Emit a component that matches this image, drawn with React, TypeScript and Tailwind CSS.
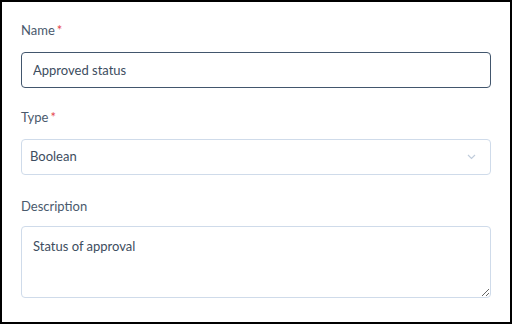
import React from "react";

export default function App() {
  return (
    <div
      className="w-[512px] h-[324px] bg-white border-2 border-black px-[19px] pt-[19px] text-[13px] text-[#3d4d60]"
      style={{ fontFamily: 'Lato, "Noto Sans", sans-serif' }}
    >
      {/* Name */}
      <label className="flex items-center h-5 text-[#4a5a6d]">
        Name<span className="ml-[2px] text-[#e5484d]">*</span>
      </label>
      <input
        type="text"
        defaultValue="Approved status"
        className="mt-[11px] w-full h-9 px-[11px] border border-[#42566d] rounded-[4px] outline-none text-[#3d4d60] bg-white"
      />

      {/* Type */}
      <label className="mt-5 flex items-center h-5 text-[#4a5a6d]">
        Type<span className="ml-[2px] text-[#e5484d]">*</span>
      </label>
      <div className="mt-[11px] w-full h-9 pl-[8px] pr-[14px] border border-[#cfdbea] rounded-[4px] flex items-center justify-between">
        <span>Boolean</span>
        <svg width="9" height="6" viewBox="0 0 9 6" fill="none">
          <path d="M1 1l3.5 3.5L8 1" stroke="#c0ccdb" strokeWidth="1.2" />
        </svg>
      </div>

      {/* Description */}
      <label className="mt-[22px] flex items-center h-5 text-[#4a5a6d]">Description</label>
      <textarea
        defaultValue="Status of approval"
        className="mt-[9px] block w-full h-[72px] px-[11px] pt-[9px] leading-5 border border-[#cfdbea] rounded-[4px] outline-none text-[#3d4d60] resize-y"
      />
    </div>
  );
}
